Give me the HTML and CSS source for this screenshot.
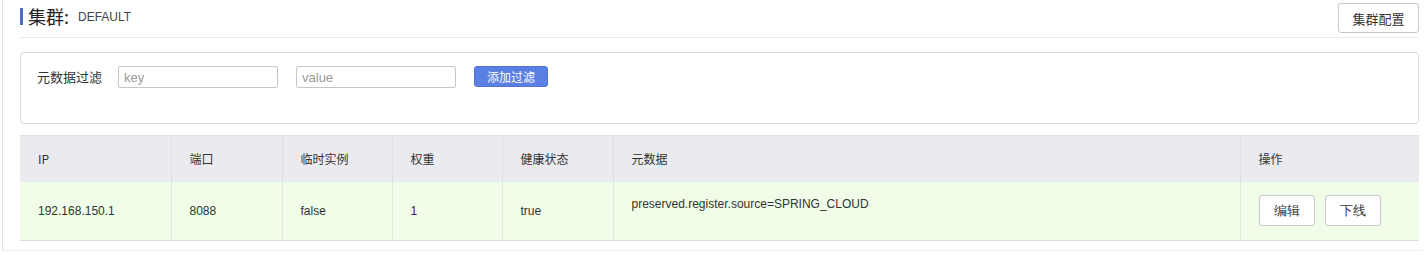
FILE: index.html
```html
<!DOCTYPE html>
<html>
<head>
<meta charset="utf-8">
<link rel="stylesheet" href="styles.css">
</head>
<body>
<div class="page">
  <div class="header">
    <div class="title"><span class="title-main">集群:</span><span class="title-sub">DEFAULT</span></div>
    <button class="btn">集群配置</button>
  </div>
  <div class="filter">
    <span class="filter-label">元数据过滤</span>
    <input class="inp" placeholder="key">
    <input class="inp inp2" placeholder="value">
    <button class="btn-primary">添加过滤</button>
  </div>
  <table class="tbl">
    <thead>
      <tr>
        <th class="c1">IP</th>
        <th class="c2">端口</th>
        <th class="c3">临时实例</th>
        <th class="c4">权重</th>
        <th class="c5">健康状态</th>
        <th class="c6">元数据</th>
        <th class="c7">操作</th>
      </tr>
    </thead>
    <tbody>
      <tr>
        <td>192.168.150.1</td>
        <td>8088</td>
        <td>false</td>
        <td>1</td>
        <td>true</td>
        <td class="meta">preserved.register.source=SPRING_CLOUD</td>
        <td><div class="ops"><button class="btn btn-sm">编辑</button><button class="btn btn-sm">下线</button></div></td>
      </tr>
    </tbody>
  </table>
</div>
</body>
</html>
```

FILE: styles.css
```css
* { box-sizing: border-box; }
html, body { margin: 0; padding: 0; background: #fff; }
body {
  font-family: "Noto Sans CJK SC", "Noto Sans", "Liberation Sans", sans-serif;
  color: #333;
  font-size: 13px;
}
.page {
  margin-left: 2px;
  width: 1420px;
  height: 251px;
  border-left: 1px solid #e2e2e2;
  border-bottom: 1px solid #eeeeee;
  padding: 3px 3px 0 17px;
}
.header {
  display: flex;
  justify-content: space-between;
  align-items: flex-start;
  border-bottom: 1px solid #eaeaea;
  height: 35px;
}
.title {
  margin-top: 5px;
  border-left: 3px solid #4a6fc9;
  padding-left: 5px;
  height: 17px;
  display: flex;
  align-items: center;
}
.title-main { font-size: 18px; color: #222; line-height: 17px; }
.title-sub { font-size: 12px; color: #444; margin-left: 9px; font-family: "Liberation Sans", sans-serif; }
.btn {
  font-family: inherit;
  background: #fff;
  border: 1px solid #c8c8c8;
  border-radius: 3px;
  color: #333;
  font-size: 13px;
  width: 81px;
  height: 30px;
  padding: 0;
  cursor: pointer;
}
.filter {
  margin-top: 14px;
  height: 72px;
  border: 1px solid #dddddd;
  border-radius: 4px;
  display: flex;
  align-items: flex-start;
  padding: 13px 0 0 16px;
}
.filter-label { font-size: 13px; line-height: 22px; margin-right: 16px; color: #333; }
.inp {
  width: 160px;
  height: 22px;
  border: 1px solid #c6c6c6;
  border-radius: 2px;
  padding: 0 5px;
  font-family: "Liberation Sans", sans-serif;
  font-size: 13px;
  color: #333;
  margin-right: 18px;
}
.inp::placeholder { color: #999; }
.inp2 { margin-right: 18px; }
.btn-primary {
  width: 74px;
  height: 21px;
  background: #5b7fe2;
  border: 1px solid #4f73d6;
  border-radius: 3px;
  color: #fff;
  font-family: inherit;
  font-size: 12px;
  padding: 0;
}
.tbl {
  margin-top: 11px;
  width: 1399px;
  border-collapse: collapse;
  table-layout: fixed;
  border-bottom: 1px solid #dcdcdc;
}
.tbl th {
  background: #ebebef;
  height: 46px;
  text-align: left;
  font-weight: normal;
  font-size: 12px;
  color: #333;
  padding: 0 18px;
  border-left: 1px solid #e0e0e4;
  border-top: 1px solid #e0e0e0;
}
.tbl th:first-child { border-left: none; }
.tbl td {
  background: #effde9;
  height: 59px;
  font-size: 12px;
  padding: 0 18px;
  border-left: 1px solid #dde8d8;
  font-family: "Liberation Sans", sans-serif;
  color: #333;
}
.tbl td:first-child { border-left: none; }
.tbl td.meta { vertical-align: top; padding-top: 15px; }
.c1 { width: 151px; }
.c2 { width: 111px; }
.c3 { width: 110px; }
.c4 { width: 110px; }
.c5 { width: 111px; }
.c6 { width: 627px; }
.ops { display: flex; gap: 10px; }
.btn-sm { width: 56px; height: 31px; font-size: 13px; }
```
